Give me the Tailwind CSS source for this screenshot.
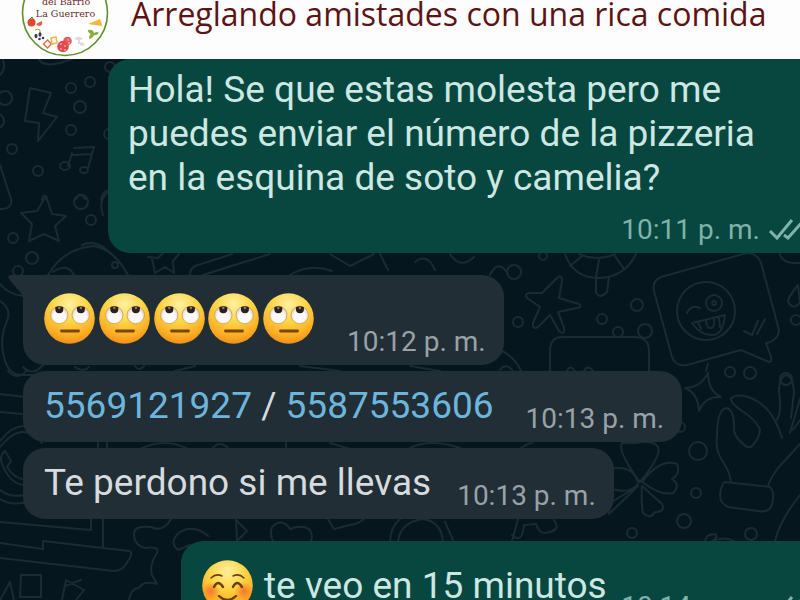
<!DOCTYPE html>
<html lang="es">
<head>
  <meta charset="UTF-8">
  <meta name="viewport" content="width=device-width, initial-scale=1.0">
  <title>Arreglando amistades con una rica comida</title>
  <script src="https://cdn.jsdelivr.net/npm/@tailwindcss/browser@4"></script>
</head>
<body class="h-screen overflow-hidden flex flex-col bg-[#05161f] font-['Roboto',sans-serif]">

  <!-- shared shapes -->
  <svg class="absolute w-0 h-0" aria-hidden="true">
    <defs>
      <radialGradient id="face" cx="50%" cy="22%" r="80%">
        <stop offset="0" stop-color="#fff0a0"/>
        <stop offset="0.45" stop-color="#fdd443"/>
        <stop offset="0.8" stop-color="#fbab22"/>
        <stop offset="1" stop-color="#ee8a1c"/>
      </radialGradient>
      <radialGradient id="cheek">
        <stop offset="0" stop-color="#f4652a" stop-opacity="0.8"/>
        <stop offset="1" stop-color="#f4652a" stop-opacity="0"/>
      </radialGradient>
      <radialGradient id="eye" cx="50%" cy="60%" r="55%">
        <stop offset="0.6" stop-color="#fbfaf8"/>
        <stop offset="1" stop-color="#d9d3cc"/>
      </radialGradient>
      <symbol id="rolling" viewBox="0 0 51 51">
        <circle cx="25.5" cy="25.5" r="25.3" fill="url(#face)"/>
        <circle cx="15.3" cy="22" r="8.7" fill="url(#eye)" stroke="#c98a2b" stroke-width="0.6"/>
        <circle cx="36.7" cy="22" r="8.7" fill="url(#eye)" stroke="#c98a2b" stroke-width="0.6"/>
        <path d="M11.3 14.3a8.7 8.7 0 0 1 8 0v2a4 4 0 0 1-8 0zM32.9 14.3a8.7 8.7 0 0 1 8 0v2a4 4 0 0 1-8 0z" fill="#2b201c"/>
        <circle cx="15.3" cy="15" r="1.2" fill="#8a7c74"/>
        <circle cx="36.9" cy="15" r="1.2" fill="#8a7c74"/>
        <path d="M17.5 38h17" stroke="#7a4413" stroke-width="2.8" stroke-linecap="round"/>
      </symbol>
      <symbol id="blush" viewBox="0 0 51 51">
        <circle cx="25.5" cy="25.5" r="25.3" fill="url(#face)"/>
        <circle cx="9" cy="31" r="9" fill="url(#cheek)"/>
        <circle cx="42" cy="31" r="9" fill="url(#cheek)"/>
        <g fill="none" stroke="#6b3f12" stroke-linecap="round">
          <path d="M9 18q5-5 11-2M31 16q6-3 11 2" stroke-width="1.5"/>
          <path d="M12 27q4-8 9 0M31 27q4-8 9 0" stroke-width="2.4"/>
          <path d="M17 36q8.500 8 17 0" stroke-width="2.4"/>
        </g>
      </symbol>
      <symbol id="checks" viewBox="0 0 40 24">
        <path d="M2 13l7 7L24 2M16 17l4 3L36 2" fill="none" stroke="currentColor" stroke-width="3"/>
      </symbol>
    </defs>
  </svg>

  <header class="shrink-0 h-[59px] flex items-start gap-[22px] pl-[21px] bg-[#fdfdfd] overflow-hidden">
    <svg class="shrink-0 w-[88px] h-[58px]" viewBox="21 0 88 58" role="img" aria-label="del Barrio La Guerrero">
      <circle cx="65" cy="13" r="42.500" fill="#fff" stroke="#5f8f2f" stroke-width="1.6"/>
      <g fill="#6b2a2e" font-family="'DejaVu Serif', serif" font-size="9.500" text-anchor="middle">
        <text x="66" y="5">del Barrio</text>
        <text x="65.500" y="17">La Guerrero</text>
      </g>
      <circle cx="31.500" cy="22.500" r="4" fill="#e2482c"/>
      <path d="M30 19l2-2 1 2" stroke="#4b7a2a" fill="none"/>
      <path d="M36 24l6-3q1 4-2 5-3 0-4-2z" fill="#ee5a48"/>
      <path d="M35 30q3-2 5 0v4" stroke="#94ac3a" fill="none"/>
      <g fill="#3a3f4b">
        <ellipse cx="36" cy="36" rx="1.500" ry="2.200"/><ellipse cx="40" cy="34.500" rx="1.500" ry="2.200"/>
        <circle cx="39.500" cy="39" r="1.300"/><circle cx="43" cy="38" r="1.300"/>
      </g>
      <path d="M43.500 44l4-4 4 4-4 4z" fill="none" stroke="#ea6b4c" stroke-width="1.500"/>
      <path d="M51 38l5-1 1 6-5 1z" fill="none" stroke="#f0b548" stroke-width="1.500"/>
      <circle cx="67.500" cy="41" r="4.300" fill="#e35c5c"/>
      <circle cx="63" cy="46.500" r="5.800" fill="#df4a50"/>
      <g fill="#f4a8a4">
        <circle cx="61" cy="44" r="0.900"/><circle cx="65" cy="46" r="0.900"/><circle cx="61" cy="49" r="0.900"/>
        <circle cx="65" cy="50" r="0.900"/><circle cx="68" cy="40" r="0.900"/><circle cx="69" cy="43" r="0.900"/>
      </g>
      <path d="M74 39q4-5 9 0l-3 1v4h-2v-4zM79 43q4-2 6 2l-4 1z" fill="#dcdcdc"/>
      <path d="M88 24l12-5q2 4 2 7z" fill="#f5b83a"/>
      <path d="M88 30q5-1 6 3 3-2 5 0-3 3-5 2-1 3-5 4 0-4 2-5-3-1-3-4z" fill="#86ac3c"/>
    </svg>
    <h1 class="-mt-[6px] whitespace-nowrap font-['Open_Sans',sans-serif] text-[32px] leading-[40px] text-[#5c1414]">Arreglando amistades con una rica comida</h1>
  </header>

  <main class="relative grow min-h-0 overflow-hidden flex flex-col items-start">
    <!-- wallpaper doodles -->
    <svg class="absolute inset-0 w-full h-full" viewBox="0 59 800 541" preserveAspectRatio="xMinYMin slice" fill="none" stroke="#1b2b33" stroke-width="2" stroke-linejoin="round" stroke-linecap="round" aria-hidden="true">
      <!-- upper left -->
      <path d="M39 60q6 7 21 3l12-4M0 75q6-6 3-15M30 88l21 5-8 20 14 4-19 24 1-18-14-2z"/>
      <path d="M74 148l20-1-6 21M72 153l-4 13M73 155l19-1"/>
      <ellipse cx="65" cy="166" rx="5" ry="4"/><ellipse cx="84" cy="170" rx="4" ry="3"/>
      <circle cx="90" cy="82" r="5"/><circle cx="71" cy="88" r="5"/><circle cx="80" cy="107" r="6"/><circle cx="71" cy="130" r="5"/>
      <circle cx="5" cy="98" r="7"/><circle cx="-3" cy="121" r="7"/><circle cx="12" cy="149" r="5"/><circle cx="38" cy="171" r="5"/>
      <circle cx="110" cy="67" r="5"/><circle cx="109" cy="134" r="5"/>
      <path d="M0 165l11 34q2 10-11 10M42 200q2-9 5 0M76 199q4-9 9 0M101 200q2-10 8-9"/>
      <path d="M46 196l6 18 14 2-11 10 4 15-15-7-15 7 3-17-11-11 16-2z"/>
      <circle cx="81" cy="202" r="7"/><circle cx="91" cy="220" r="5"/><circle cx="13" cy="238" r="5"/><circle cx="32" cy="258" r="6"/><circle cx="18" cy="271" r="5"/>
      <path d="M103 215q-5-14 4-22M48 275q15-26 45-29 20 2 35 29M82 245q14-7 29 9M53 272q14-10 21 3"/>
      <path d="M148 257l10 1 6-6M152 259l3 14 10-6 9 6-1-12 6-7M190 275q0-8 8-10l34-11M203 275l67-21"/>
      <circle cx="115" cy="265" r="3"/>
      <!-- left edge -->
      <path d="M0 284q8 10 23 12M0 301q12 7 7 20-8 18-3 36 4 18 18 18h20M23 367q10 10 20-2"/>
      <path d="M0 394l25 3M0 412l22 2M8 371q10 10 18 0"/>
      <path d="M46 441q-22-30-46 0M42 443q-20-24-42 4M0 490q10 8 25 5M0 499q14 8 29 2M5 451q-6 5-3 13 8 20 22 21M5 451l6 10-4 6q6 10 15 12"/>
      <path d="M0 522l91 8V519M103 519v28M0 543l43 6v-8l86 10q5 1-1 10-5 10-14 10L0 558"/>
      <path d="M21 575h20v22H20zM0 600l10-18 4 18M62 600l4-20 18 10-8 10M81 580l-16 6"/>
      <path d="M171 519q-8 14-20 8-18-2-17 8 0 10 11 13 15-2 12 5-8 12-5 22l5 9q-14-4-18 4-8 0-10 12M208 536q-14-12-28-4-12 10-2 18l12-5M236 519l1 22M237 521l10 10-10 10"/>
      <path d="M280 548q-12-8-8-21 10-10 18 2 12-5 20 1 5 10-3 16M328 519l6 10 24-6 6-4M390 543q0-16 10-24M398 543q1-20 24-24 20 2 21 24M445 522l8 18M512 541l6-22M512 535q10 10 12-10l12-1q4 12 13 8 12-2 5-12"/>
      <!-- between the bubbles -->
      <path d="M98 443v6M107 443v6M140 449q25-12 48 0M212 449q8-10 17 0M286 443v6M330 443l20 6M410 448q20-10 50 0M520 449q8-6 12-6"/>
      <path d="M75 367q8 6 14 0M135 366q4 6 9 0M175 371l20-5M300 366l40 5M410 366l30 5"/>
      <!-- centre -->
      <path d="M290 275q20-12 42-4M330 254l20 12 24-12M380 254l8 16M415 262q12-10 20 8M450 254q10 16 24 3M490 275q7-15 16-4"/>
      <circle cx="514" cy="272" r="7"/><circle cx="543" cy="256" r="4"/><circle cx="518" cy="322" r="5"/>
      <path d="M558 277q4-2 4 4l-3 17 20 6q4 3-2 4l-19 4q3 7 6 16 1 8-5 3l-9-16-12 12q-6 3-5-4l7-16-13-9q-3-5 3-5h12l8-8z"/>
      <path d="M565 254q8 24 34 24 26-1 37-24M579 254q18 8 36 0M599 260l-3 17M582 256l-12 10M615 256l9 13M596 278v14q3 8 11 0l2-15"/>
      <circle cx="602" cy="319" r="5"/><circle cx="637" cy="305" r="6"/><circle cx="618" cy="332" r="5"/><circle cx="645" cy="331" r="7"/>
      <path d="M550 371v-22q1-12 12-12h72q15 0 15 14v20M567 371q3-7 8 0M584 371q4-7 9 0M500 350q15 7 21 21M500 370q6-8 13 1"/>
      <!-- winking speech bubble -->
      <path d="M743 254l-82 23q-9 4-7 14l18 66q4 10 15 8l54-15 28 12q3 0 2-5l-5-14q12-2 13-13l-18-67q-4-10-14-10z"/>
      <circle cx="706" cy="311" r="29"/><circle cx="714" cy="303" r="8"/><circle cx="714" cy="303" r="2"/>
      <path d="M687 313q4-9 13-5M692 323l33-8q-2 21-14 20-11 0-19-12zM698 322l3 7M706 321q1 8 5 7 4-1 3-9M719 318l1 9M744 331l8 4 6-14M757 334l8-15"/>
      <!-- right edge -->
      <path d="M780 254q2 10 20 9M798 285q-10 12-10 17 6 9 12 0z"/>
      <circle cx="796" cy="320" r="5"/><circle cx="730" cy="372" r="5"/><circle cx="750" cy="373" r="6"/><circle cx="786" cy="379" r="6"/>
      <path d="M708 373q0 18 13 24-16-1-22 14-1-18-14-23 15 0 23-15zM706 371l2-7"/>
      <circle cx="698" cy="451" r="9"/><circle cx="696" cy="493" r="5"/><circle cx="684" cy="521" r="7"/><circle cx="632" cy="533" r="5"/><circle cx="751" cy="534" r="6"/><circle cx="680" cy="427" r="5"/>
      <path d="M640 482q-23-31-18-39h14q17-3 22 4 4 8-18 35zM642 482q18-24 35-18 4 10-5 15 9 6 1 14-12 3-31-11zM638 482q-6-18-28-13M638 484q-8 10-26 5M642 486l20 18q4 8-7 8-5 8-12 1-2-8-1-27zM638 486l-29 28 1-11z"/>
      <!-- hand -->
      <path d="M731 482q-1-10-9-22-7-10-5-24 0-26 9-28 8 1 8 18-1 8 6 15 8 9 12 5 8-8 8-17-6-11-18-18-12-8-11-13 9-6 26 3 17 10 25 37M777 420q5-9 2-28 0-16 8-17 6 2 7 17l-3 26M800 399l-10 34M800 420l-7 10M800 444l-22 24q-7 9-10 18M725 482l45 5q6 6 1 20-4 6-13 4l-30-4q-12-6-6-21 2-4 3-4z"/>
      <path d="M800 495q-20 25-25 46M705 541q1-7 10-7 4 3-3 7 14-5 22 0"/>
    </svg>

    <article class="relative self-stretch ml-[108px] pt-[9px] pb-[7px] pl-5 rounded-l-[22px] bg-[#07473f] text-[#cde7e3]">
      <p class="text-[37px] leading-[44px] whitespace-nowrap">Hola! Se que estas molesta pero me<br>puedes enviar el número de la pizzeria<br>en la esquina de soto y camelia?</p>
      <div class="mt-[14px] -mr-2 flex items-center justify-end gap-2 text-[#7fb2aa]">
        <time class="text-[28px] leading-[32px]">10:11 p. m.</time>
        <svg class="w-10 h-6" role="img" aria-label="Entregado"><use href="#checks"/></svg>
      </div>
    </article>

    <article class="relative mt-[22px] ml-[23px] flex items-end gap-[33px] pt-[18px] pb-[7px] pl-[21px] pr-[18px] rounded-[22px] rounded-tl-none bg-[#222e35]">
      <svg class="absolute top-0 -left-[15px] w-4 h-[22px]" viewBox="0 0 16 22" fill="#222e35" aria-hidden="true"><path d="M3 0h13v22L1 4Q-1 0 3 0z"/></svg>
      <p class="mb-[14px] w-[270px] flex justify-between">
        <svg class="size-[51px]" role="img" aria-label="Ojos en blanco"><use href="#rolling"/></svg>
        <svg class="size-[51px]" role="img" aria-label="Ojos en blanco"><use href="#rolling"/></svg>
        <svg class="size-[51px]" role="img" aria-label="Ojos en blanco"><use href="#rolling"/></svg>
        <svg class="size-[51px]" role="img" aria-label="Ojos en blanco"><use href="#rolling"/></svg>
        <svg class="size-[51px]" role="img" aria-label="Ojos en blanco"><use href="#rolling"/></svg>
      </p>
      <time class="text-[28px] leading-[32px] whitespace-nowrap text-[#98a2a8]">10:12 p. m.</time>
    </article>

    <article class="relative mt-[6px] ml-[23px] flex items-end gap-8 pt-[13px] pb-[7px] pl-[21px] pr-[18px] rounded-[22px] bg-[#222e35]">
      <p class="mb-[7px] text-[37px] leading-[44px] whitespace-nowrap text-[#d5dbde]"><a href="tel:5569121927" class="text-[#6cb6de]">5569121927</a> / <a href="tel:5587553606" class="text-[#6cb6de]">5587553606</a></p>
      <time class="text-[28px] leading-[32px] whitespace-nowrap text-[#98a2a8]">10:13 p. m.</time>
    </article>

    <article class="relative mt-[6px] ml-[23px] flex items-end gap-[26px] pt-[13px] pb-[7px] pl-[21px] pr-[18px] rounded-[22px] bg-[#222e35]">
      <p class="mb-[7px] text-[37px] leading-[44px] whitespace-nowrap text-[#d5dbde]">Te perdono si me llevas</p>
      <time class="text-[28px] leading-[32px] whitespace-nowrap text-[#98a2a8]">10:13 p. m.</time>
    </article>

    <article class="relative self-stretch mt-[22px] ml-[181px] flex items-end pt-[19px] pb-2 pl-[21px] rounded-l-[22px] bg-[#07473f] text-[#cde7e3]">
      <p class="flex items-center gap-[11px] text-[37px] leading-[44px] whitespace-nowrap">
        <svg class="size-[51px]" role="img" aria-label="Sonrisa"><use href="#blush"/></svg>
        te veo en 15 minutos
      </p>
      <div class="-mb-3 -mr-2 grow flex items-center justify-end gap-2 text-[#7fb2aa]">
        <time class="text-[28px] leading-[32px] whitespace-nowrap">10:14 p. m.</time>
        <svg class="w-10 h-6" role="img" aria-label="Entregado"><use href="#checks"/></svg>
      </div>
    </article>
  </main>
</body>
</html>
